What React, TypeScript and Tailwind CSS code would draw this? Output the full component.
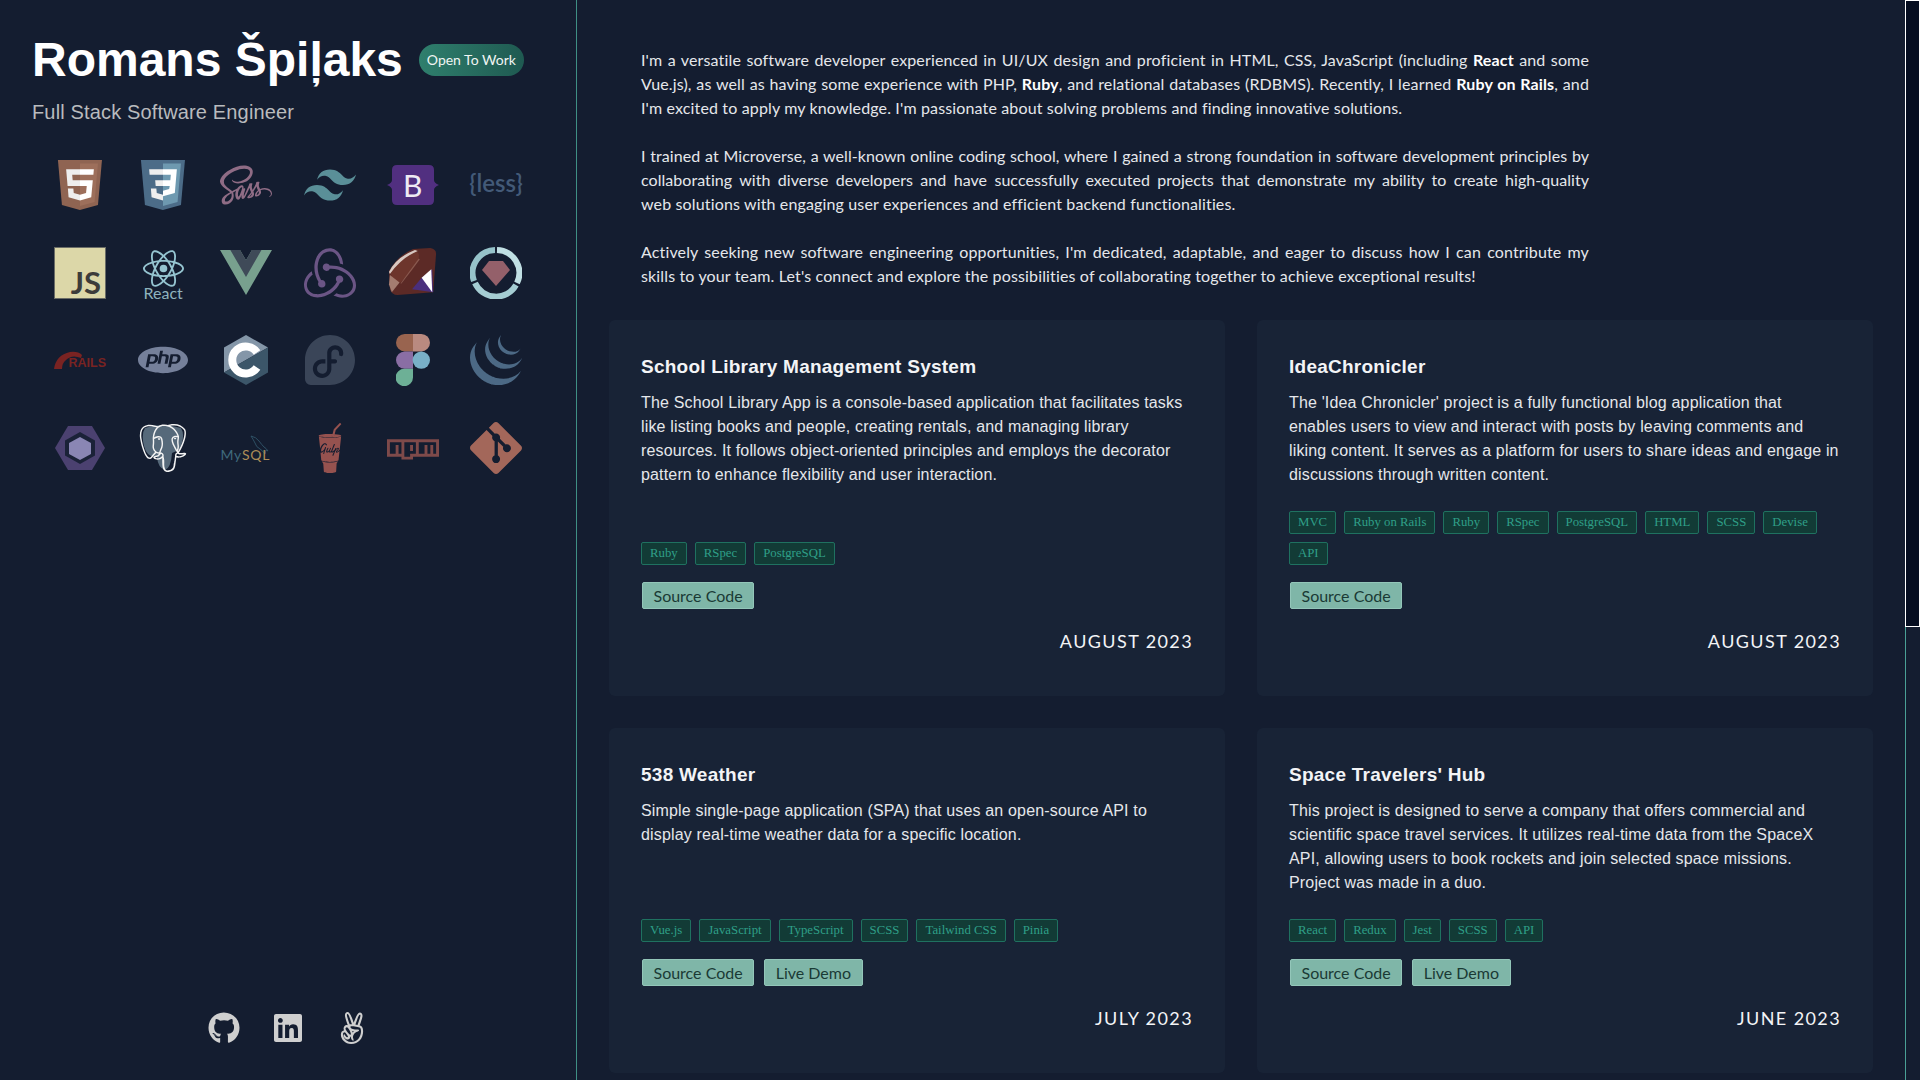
import {
  SiTailwindcss, SiRedux, SiPhp, SiFedora, SiJquery,
  SiPostgresql, SiGit, SiReact,
} from 'react-icons/si'
import { FaGithub, FaLinkedin, FaAngellist, FaSass, FaGulp, FaNpm } from 'react-icons/fa'

const sans = "font-['Liberation_Sans',sans-serif]"
const soft = "font-['Lato',sans-serif]"

function Html5() {
  return (
    <svg viewBox="0 0 512 512" className="w-[50px] h-[50px]" preserveAspectRatio="none">
      <path d="M71 460 30 0h451l-41 460-185 52z" fill="#8f6452" />
      <path d="M256 472l149-41 35-394H256z" fill="#9d6f5b" />
      <path d="M256 208h-75l-5-58h80V94H114l15 171h127zm0 147-64-17-4-45h-56l7 89 117 32z" fill="#eeeeee" />
      <path d="M256 208v57h69l-7 73-62 17v59l115-32 16-174zm0-114v56h137l5-56z" fill="#ffffff" />
    </svg>
  )
}

function Css3() {
  return (
    <svg viewBox="0 0 512 512" className="w-[50px] h-[50px]" preserveAspectRatio="none">
      <path d="M71 460 30 0h451l-41 460-185 52z" fill="#4c6c88" />
      <path d="M256 472l149-41 35-394H256z" fill="#6e99b0" />
      <path d="M256 94H114l5 56h137zm0 114h-80l5 57h75zm0 147-64-17-4-45h-56l7 89 117 32z" fill="#eeeeee" />
      <path d="M256 94h142l-21 244-121 34v-58l63-17 6-32h-69v-57h75l5-58h-80z" fill="#ffffff" />
    </svg>
  )
}

function Bootstrap() {
  return (
    <div className="relative w-[52px] h-[40px]">
      <svg viewBox="0 0 52 40" className="w-full h-full">
        <path d="M10 0h32q5 0 5 5v10q0 3 5 5-5 2-5 5v10q0 5-5 5H10q-5 0-5-5V25q0-3-5-5 5-2 5-5V5q0-5 5-5z" fill="#512f80" />
      </svg>
      <span className={`absolute inset-0 flex items-center justify-center text-[30px] leading-none text-[#eeeaf3] ${soft}`}>B</span>
    </div>
  )
}

function Js() {
  return (
    <div className="w-[52px] h-[52px] bg-[#dcd7a8] border border-[#6a6c66] flex items-end justify-end pr-1 pb-0">
      <span className={`text-[31px] leading-[32px] font-bold text-[#3c3c3a] ${soft}`}>JS</span>
    </div>
  )
}

function ReactLogo() {
  return (
    <div className="pt-[2px] flex flex-col items-center">
      <SiReact size={41} color="#95c4d0" />
      <span className={`-mt-[3px] text-[16px] leading-[13px] text-[#8fb3bd] ${soft}`}>React</span>
    </div>
  )
}

function Vue() {
  return (
    <svg viewBox="0 0 262 227" className="w-[52px] h-[45px]">
      <path d="M161 0l-30 52L101 0H0l131 227L262 0z" fill="#78a08e" />
      <path d="M161 0l-30 52L101 0H52l79 136L209 0z" fill="#3f4a58" />
    </svg>
  )
}

function RubyGem() {
  return (
    <svg viewBox="0 0 52 52" className="w-[50px] h-[50px]">
      <path d="M1 24Q10 8 26 1L44 0Q50 1 50 6L47 46 10 49Q4 49 2 43z" fill="#5c2a26" />
      <path d="M3 27Q6 12 28 4 33 4 32 10 30 20 13 36 5 37 3 27z" fill="#6d352c" />
      <path d="M12 36 2 28 1 38 4 46z" fill="#a47c70" />
      <path d="M1 25Q8 10 28 2L31 3Q14 10 2 27z" fill="#d8c8c2" />
      <path d="M13 37 32 11l1 1-19 25z" fill="#8a5a50" />
      <path d="M25 43 35 31l11-9 1 24z" fill="#4a2f7d" />
      <path d="M35 31 46 46l-1-24z" fill="#ffffff" />
    </svg>
  )
}

function RubyGems() {
  return (
    <svg viewBox="0 0 52 52" className="w-[52px] h-[52px]">
      <path d="M27 3A23 23 0 0 1 47 36" fill="none" stroke="#c0dfe3" strokeWidth="6" />
      <path d="M46 38A23 23 0 0 1 5 36" fill="none" stroke="#a5cdd3" strokeWidth="6" />
      <path d="M4 34A23 23 0 0 1 25 3" fill="none" stroke="#96c3ca" strokeWidth="6" />
      <path d="M19 14h14l7 9-14 16-14-16z" fill="#94606a" />
    </svg>
  )
}

function Rails() {
  return (
    <div className="relative w-[52px] h-[18px]">
      <svg viewBox="0 0 52 18" className="w-full h-full">
        <path d="M0 18Q2 4 16 1 24 0 28 4L27 7Q18 3 12 9 8 12 8 18z" fill="#7a2322" />
      </svg>
      <span className={`absolute right-0 bottom-0 text-[12.5px] leading-[12px] font-bold text-[#7a2322] ${sans}`}>RAILS</span>
    </div>
  )
}

function CLang() {
  return (
    <svg viewBox="0 0 44 50" className="w-[44px] h-[50px]">
      <path d="M22 0 44 12.5 0 37.5V12.5z" fill="#8496a8" />
      <path d="M44 12.5v25L22 50 0 37.5z" fill="#3c5669" />
      <path d="M33 17.5A13.5 13.5 0 1 0 33 32.5" fill="none" stroke="#ffffff" strokeWidth="8" />
    </svg>
  )
}

function Figma() {
  return (
    <svg viewBox="0 0 34 52" className="w-[34px] h-[52px]">
      <path d="M17 0H8.7a8.7 8.7 0 0 0 0 17.4H17z" fill="#99644f" />
      <path d="M17 0h8.3a8.7 8.7 0 0 1 0 17.4H17z" fill="#b98a80" />
      <path d="M17 17.4H8.7a8.7 8.7 0 0 0 0 17.4H17z" fill="#8a6ea4" />
      <circle cx="25.3" cy="26.1" r="8.7" fill="#79b0c8" />
      <path d="M8.7 34.8H17v8.5a8.7 8.7 0 1 1-8.3-8.5z" fill="#6db096" />
    </svg>
  )
}

function Eslint() {
  return (
    <svg viewBox="0 0 50 44" className="w-[50px] h-[44px]">
      <path d="M13 0h24l13 22-13 22H13L0 22z" fill="#4b4170" />
      <path d="M25 6 40 14.5v15L25 38 10 29.5v-15z" fill="#1b2238" />
      <path d="M25 11 36 17v11L25 34 14 28V17z" fill="#8a86b4" />
    </svg>
  )
}

function Postgres() {
  return (
    <div className="relative w-[48px] h-[48px]">
      <svg viewBox="0 0 48 48" className="absolute inset-0 w-full h-full">
        <path d="M6 4Q22-2 42 4 47 12 40 26L33 29Q32 44 26 46 19 44 18 33 8 34 5 22 2 10 6 4z" fill="#56697a" />
      </svg>
      <div className="absolute inset-0">
        <SiPostgresql size={48} color="#f4f4f4" />
      </div>
    </div>
  )
}

function Mysql() {
  return (
    <div className="relative w-[52px] h-[52px]">
      <svg viewBox="0 0 20 20" className="absolute left-[30px] top-[13px] w-[20px] h-[20px]">
        <path d="M1 1Q6 2 9 6 12 10 14 12 16 13 18 16L16 15 15 19Q12 15 10 14 6 12 5 8 3 4 1 1z" fill="none" stroke="#31566a" strokeWidth="0.9" />
      </svg>
      <span className={`absolute left-0 bottom-[12px] text-[14px] leading-[14px] tracking-[0.8px] whitespace-nowrap ${soft}`}>
        <span className="text-[#3f6a7c]">My</span>
        <span className="text-[#ae8d58]">SQL</span>
      </span>
    </div>
  )
}

const stack = [
  <Html5 />,
  <Css3 />,
  <FaSass size={52} color="#8f6c85" />,
  <SiTailwindcss size={52} color="#5a8f98" />,
  <Bootstrap />,
  <span className={`-mt-1 text-[24px] leading-none font-semibold text-[#435a78] ${soft}`}>{'{less}'}</span>,
  <Js />,
  <ReactLogo />,
  <Vue />,
  <SiRedux size={52} color="#6b5585" />,
  <RubyGem />,
  <RubyGems />,
  <Rails />,
  <SiPhp size={50} color="#75809a" />,
  <CLang />,
  <SiFedora size={50} color="#3a4558" />,
  <Figma />,
  <SiJquery size={52} color="#4c6985" />,
  <Eslint />,
  <Postgres />,
  <Mysql />,
  <FaGulp size={50} color="#96524f" />,
  <FaNpm size={52} color="#7e4a4a" />,
  <SiGit size={52} color="#a3675a" />,
]

const projects = [
  {
    title: 'School Library Management System',
    text: 'The School Library App is a console-based application that facilitates tasks like listing books and people, creating rentals, and managing library resources. It follows object-oriented principles and employs the decorator pattern to enhance flexibility and user interaction.',
    tags: ['Ruby', 'RSpec', 'PostgreSQL'],
    demo: false,
    date: 'AUGUST 2023',
  },
  {
    title: 'IdeaChronicler',
    text: "The 'Idea Chronicler' project is a fully functional blog application that enables users to view and interact with posts by leaving comments and liking content. It serves as a platform for users to share ideas and engage in discussions through written content.",
    tags: ['MVC', 'Ruby on Rails', 'Ruby', 'RSpec', 'PostgreSQL', 'HTML', 'SCSS', 'Devise', 'API'],
    demo: false,
    date: 'AUGUST 2023',
  },
  {
    title: '538 Weather',
    text: 'Simple single-page application (SPA) that uses an open-source API to display real-time weather data for a specific location.',
    tags: ['Vue.js', 'JavaScript', 'TypeScript', 'SCSS', 'Tailwind CSS', 'Pinia'],
    demo: true,
    date: 'JULY 2023',
  },
  {
    title: "Space Travelers' Hub",
    text: 'This project is designed to serve a company that offers commercial and scientific space travel services. It utilizes real-time data from the SpaceX API, allowing users to book rockets and join selected space missions. Project was made in a duo.',
    tags: ['React', 'Redux', 'Jest', 'SCSS', 'API'],
    demo: true,
    date: 'JUNE 2023',
  },
]

function LinkButton({ label }: { label: string }) {
  return (
    <a className={`h-[27px] px-[10.5px] flex items-center bg-[#7fb6a8] border border-[#93c6b9] rounded-[2px] text-[#1a3a35] text-base ${soft}`}>
      {label}
    </a>
  )
}

function ProjectCard({ project }: { project: (typeof projects)[number] }) {
  return (
    <article className="bg-[#182336] rounded-md p-8 pb-10 flex flex-col">
      <h3 className={`pt-px text-[19px] leading-7 tracking-[0.25px] font-bold text-[#f3f4f6] ${sans}`}>{project.title}</h3>
      <p className={`mt-2.5 mb-6 flex-1 text-base leading-6 tracking-[0.16px] text-[#e5e7eb] ${sans}`}>{project.text}</p>
      <div className="flex flex-wrap gap-2">
        {project.tags.map((tag) => (
          <span
            key={tag}
            className="h-[23px] px-2 flex items-center border border-[#1f7160] bg-[#123b36] rounded-[2px] text-[12.8px] text-[#2f9f88] font-['Liberation_Serif',serif]"
          >
            {tag}
          </span>
        ))}
      </div>
      <div className="mt-[17px] ml-px flex gap-[10px]">
        <LinkButton label="Source Code" />
        {project.demo && <LinkButton label="Live Demo" />}
      </div>
      <div className={`mt-[18px] pb-px text-right text-lg leading-7 tracking-[1.4px] text-[#f3f4f6] ${soft}`}>{project.date}</div>
    </article>
  )
}

export default function App() {
  return (
    <div className="h-screen flex overflow-hidden bg-[#141d30] text-white">
      {/* Sidebar */}
      <aside className="w-[577px] shrink-0 h-full border-r border-[#3f8f85] flex flex-col">
        <div className="px-8 pt-8">
          <div className="flex items-center gap-4">
            <h1 className={`text-5xl leading-[56px] font-bold text-white ${sans}`}>Romans Špiļaks</h1>
            <span className={`h-8 px-2 flex items-center rounded-full bg-gradient-to-r from-[#2f7f6d] to-[#1f5a51] text-sm text-[#f0f5f3] ${soft}`}>
              Open To Work
            </span>
          </div>
          <p className={`mt-[10px] text-xl leading-7 tracking-[0.15px] text-[#b9bbbe] ${sans}`}>Full Stack Software Engineer</p>
        </div>

        <div className="mt-[33px] px-[54px] grid grid-cols-[repeat(6,52px)] auto-rows-[52px] justify-between gap-y-[35.5px]">
          {stack.map((logo, i) => (
            <div key={i} className="flex items-center justify-center">{logo}</div>
          ))}
        </div>

        <div className="mt-auto pb-[36px] flex justify-center items-center gap-8 text-[#cfcfcf]">
          <FaGithub size={32} />
          <FaLinkedin size={32} />
          <FaAngellist size={32} />
        </div>
      </aside>

      {/* Main */}
      <main className="flex-1 h-full overflow-hidden px-8 pt-12">
        <div className={`px-8 w-[1012px] flex flex-col gap-6 text-base leading-6 text-justify text-[#e5e7eb] tracking-[0.145px] ${soft}`}>
          <p>
            I'm a versatile software developer experienced in UI/UX design and proficient in HTML, CSS, JavaScript (including <strong className="text-white">React</strong> and some Vue.js), as well as having some experience with PHP, <strong className="text-white">Ruby</strong>, and relational databases (RDBMS). Recently, I learned <strong className="text-white">Ruby on Rails</strong>, and I'm excited to apply my knowledge. I'm passionate about solving problems and finding innovative solutions.
          </p>
          <p className="tracking-[0.05px]">
            <span className="block [text-align-last:justify]">I trained at Microverse, a well-known online coding school, where I gained a strong foundation in software development principles by</span>
            <span className="block [text-align-last:justify]">collaborating with diverse developers and have successfully executed projects that demonstrate my ability to create high-quality</span>
            <span className="block tracking-[0.145px]">web solutions with engaging user experiences and efficient backend functionalities.</span>
          </p>
          <p>
            Actively seeking new software engineering opportunities, I'm dedicated, adaptable, and eager to discuss how I can contribute my skills to your team. Let's connect and explore the possibilities of collaborating together to achieve exceptional results!
          </p>
        </div>

        <div className="mt-8 grid grid-cols-2 gap-8">
          {projects.map((project) => (
            <ProjectCard key={project.title} project={project} />
          ))}
        </div>
      </main>

      {/* Scrollbar */}
      <div className="w-[15px] shrink-0 h-full border-l border-[#4aa096]">
        <div className="h-[627px] -ml-px bg-[#050d20] border border-white" />
      </div>
    </div>
  )
}
